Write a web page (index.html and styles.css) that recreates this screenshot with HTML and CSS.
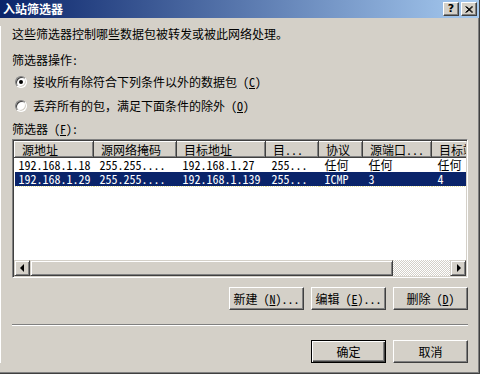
FILE: index.html
```html
<!DOCTYPE html>
<html lang="zh-CN">
<head>
    <meta charset="UTF-8">
    <title>入站筛选器</title>
    <link rel="stylesheet" href="styles.css">
</head>
<body>
    <div class="window">
        <div class="titlebar">
            <span class="title">入站筛选器</span>
            <div class="caption-btns">
                <span class="cbtn help">?</span>
                <span class="cbtn close">
                    <svg width="8" height="7" viewBox="0 0 8 7"><path d="M0.5 0.5 L7 6.5 M1.5 0.5 L8 6.5 M7 0.5 L0.5 6.5 M8 0.5 L1.5 6.5" stroke="#000" stroke-width="1"/></svg>
                </span>
            </div>
        </div>

        <div class="content">
            <p class="intro">这些筛选器控制哪些数据包被转发或被此网络处理。</p>

            <div class="label op-label">筛选器操作:</div>
            <div class="radio first">
                <span class="radio-box checked"></span>
                <span>接收所有除符合下列条件以外的数据包 (<u>C</u>)</span>
            </div>
            <div class="radio second">
                <span class="radio-box"></span>
                <span>丢弃所有的包，满足下面条件的除外 (<u>O</u>)</span>
            </div>

            <div class="label list-label">筛选器 (<u>F</u>):</div>
            <div class="listview">
                <div class="list-area">
                    <table class="filters">
                        <colgroup>
                            <col class="c1"><col class="c2"><col class="c3"><col class="c4">
                            <col class="c5"><col class="c6"><col class="c7">
                        </colgroup>
                        <thead>
                            <tr>
                                <th>源地址</th>
                                <th>源网络掩码</th>
                                <th>目标地址</th>
                                <th>目...</th>
                                <th>协议</th>
                                <th>源端口...</th>
                                <th>目标端口</th>
                            </tr>
                        </thead>
                        <tbody>
                            <tr>
                                <td>192.168.1.18</td>
                                <td>255.255....</td>
                                <td>192.168.1.27</td>
                                <td>255...</td>
                                <td>任何</td>
                                <td>任何</td>
                                <td>任何</td>
                            </tr>
                            <tr class="selected">
                                <td>192.168.1.29</td>
                                <td>255.255....</td>
                                <td>192.168.1.139</td>
                                <td>255...</td>
                                <td>ICMP</td>
                                <td>3</td>
                                <td>4</td>
                            </tr>
                        </tbody>
                    </table>
                </div>
                <div class="hscroll">
                    <span class="sbtn"><span class="arrow left"></span></span>
                    <span class="thumb"></span>
                    <span class="track"></span>
                    <span class="sbtn"><span class="arrow right"></span></span>
                </div>
            </div>

            <div class="actions">
                <button class="btn">新建 (<u>N</u>)...</button>
                <button class="btn">编辑 (<u>E</u>)...</button>
                <button class="btn">删除 (<u>D</u>)</button>
            </div>

            <div class="separator"></div>

            <div class="actions footer">
                <button class="btn default">确定</button>
                <button class="btn">取消</button>
            </div>
        </div>
    </div>
</body>
</html>
```

FILE: styles.css
```css
body {
    margin: 0;
    font-family: "Noto Sans Mono CJK SC", "Noto Sans CJK SC", sans-serif;
    font-size: 12px;
    line-height: 16px;
    color: #000;
    background: #d4d0c8;
}

.window {
    width: 480px;
    height: 374px;
    box-sizing: border-box;
    background: #d4d0c8;
    border-right: 1px solid #404040;
    border-bottom: 1px solid #404040;
    box-shadow: inset -1px -1px 0 #808080;
    overflow: hidden;
}

/* title bar */
.titlebar {
    height: 18px;
    display: flex;
    align-items: center;
    justify-content: space-between;
    padding: 0 2px 0 3px;
    background: linear-gradient(to right, #0a246a, #a6caf0);
}

.title {
    color: #fff;
    font-weight: bold;
    font-family: "Noto Sans CJK SC", sans-serif;
}

.caption-btns {
    display: flex;
    gap: 2px;
}

.cbtn {
    width: 16px;
    height: 14px;
    box-sizing: border-box;
    display: flex;
    align-items: center;
    justify-content: center;
    background: #d4d0c8;
    border-top: 1px solid #fff;
    border-left: 1px solid #fff;
    border-right: 1px solid #404040;
    border-bottom: 1px solid #404040;
    box-shadow: inset -1px -1px 0 #808080;
    font-family: "DejaVu Sans", sans-serif;
    font-weight: bold;
    font-size: 11px;
    line-height: 12px;
}

/* dialog body */
.content {
    border-left: 1px solid #fff;
    padding: 0 11px 0 11px;
}

.intro {
    margin: 8px 0 0;
    height: 16px;
}

.label {
    height: 16px;
}

.op-label {
    margin-top: 10px;
}

.radio {
    display: flex;
    align-items: center;
    gap: 6px;
    height: 16px;
    padding-left: 3px;
}

.radio.first {
    margin-top: 6px;
}

.radio.second {
    margin-top: 8px;
}

.radio-box {
    width: 12px;
    height: 12px;
    box-sizing: border-box;
    border-radius: 50%;
    background: #fff;
    border: 1px solid;
    border-color: #808080 #fff #fff #808080;
    box-shadow: inset 1px 1px 0 #404040, inset -1px -1px 0 #d4d0c8;
    display: flex;
    align-items: center;
    justify-content: center;
}

.radio-box.checked::after {
    content: "";
    width: 4px;
    height: 4px;
    border-radius: 50%;
    background: #000;
}

.list-label {
    margin-top: 7px;
}

/* list view */
.listview {
    margin-top: 2px;
    height: 139px;
    box-sizing: border-box;
    border: 1px solid;
    border-color: #808080 #fff #fff #808080;
    box-shadow: inset 1px 1px 0 #404040, inset -1px -1px 0 #d4d0c8;
    padding: 1px;
    display: flex;
    flex-direction: column;
}

.list-area {
    flex: 1;
    background: #fff;
    overflow: hidden;
}

.filters {
    table-layout: fixed;
    border-collapse: collapse;
    width: 480px;
}

.c1 { width: 79px; }
.c2 { width: 83px; }
.c3 { width: 89px; }
.c4 { width: 53px; }
.c5 { width: 44px; }
.c6 { width: 69px; }
.c7 { width: 63px; }

.filters th {
    height: 16px;
    padding: 0 0 0 7px;
    box-sizing: border-box;
    text-align: left;
    font-weight: normal;
    white-space: nowrap;
    overflow: hidden;
    background: #d4d0c8;
    border-top: 1px solid #fff;
    border-left: 1px solid #fff;
    border-right: 1px solid #404040;
    border-bottom: 1px solid #404040;
    box-shadow: inset -1px -1px 0 #808080;
    line-height: 14px;
}

.filters td {
    height: 14px;
    padding: 0 0 0 6px;
    white-space: nowrap;
    overflow: hidden;
    line-height: 14px;
}

.filters td:first-child {
    padding-left: 4px;
}

.filters tr.selected td {
    background: #0a246a;
    color: #fff;
    border-bottom: 1px dotted #e8e4a0;
}

/* horizontal scrollbar */
.hscroll {
    height: 16px;
    display: flex;
    background: #d4d0c8;
}

.sbtn,
.thumb {
    box-sizing: border-box;
    background: #d4d0c8;
    border-top: 1px solid #d4d0c8;
    border-left: 1px solid #d4d0c8;
    border-right: 1px solid #404040;
    border-bottom: 1px solid #404040;
    box-shadow: inset 1px 1px 0 #fff, inset -1px -1px 0 #808080;
}

.sbtn {
    width: 16px;
    display: flex;
    align-items: center;
    justify-content: center;
}

.thumb {
    width: 363px;
}

.track {
    flex: 1;
    background: repeating-conic-gradient(#fff 0 25%, #d4d0c8 0 50%) 0 0 / 2px 2px;
}

.arrow {
    width: 0;
    height: 0;
    border-top: 4px solid transparent;
    border-bottom: 4px solid transparent;
}

.arrow.left {
    border-right: 4px solid #000;
    margin-right: 1px;
}

.arrow.right {
    border-left: 4px solid #000;
    margin-left: 1px;
}

/* buttons */
.actions {
    margin-top: 9px;
    display: flex;
    justify-content: flex-end;
    gap: 7px;
}

.btn {
    width: 75px;
    height: 23px;
    box-sizing: border-box;
    font-family: inherit;
    font-size: 12px;
    color: #000;
    background: #d4d0c8;
    border-top: 1px solid #fff;
    border-left: 1px solid #fff;
    border-right: 1px solid #404040;
    border-bottom: 1px solid #404040;
    box-shadow: inset -1px -1px 0 #808080;
    padding: 0;
    white-space: nowrap;
}

.btn.default {
    border: 1px solid #000;
    box-shadow: inset 1px 1px 0 #fff, inset -1px -1px 0 #404040, inset -2px -2px 0 #808080;
}

.separator {
    margin-top: 14px;
    height: 1px;
    border-top: 1px solid #808080;
    border-bottom: 1px solid #fff;
    height: 0;
}

.footer {
    margin-top: 14px;
}
```
